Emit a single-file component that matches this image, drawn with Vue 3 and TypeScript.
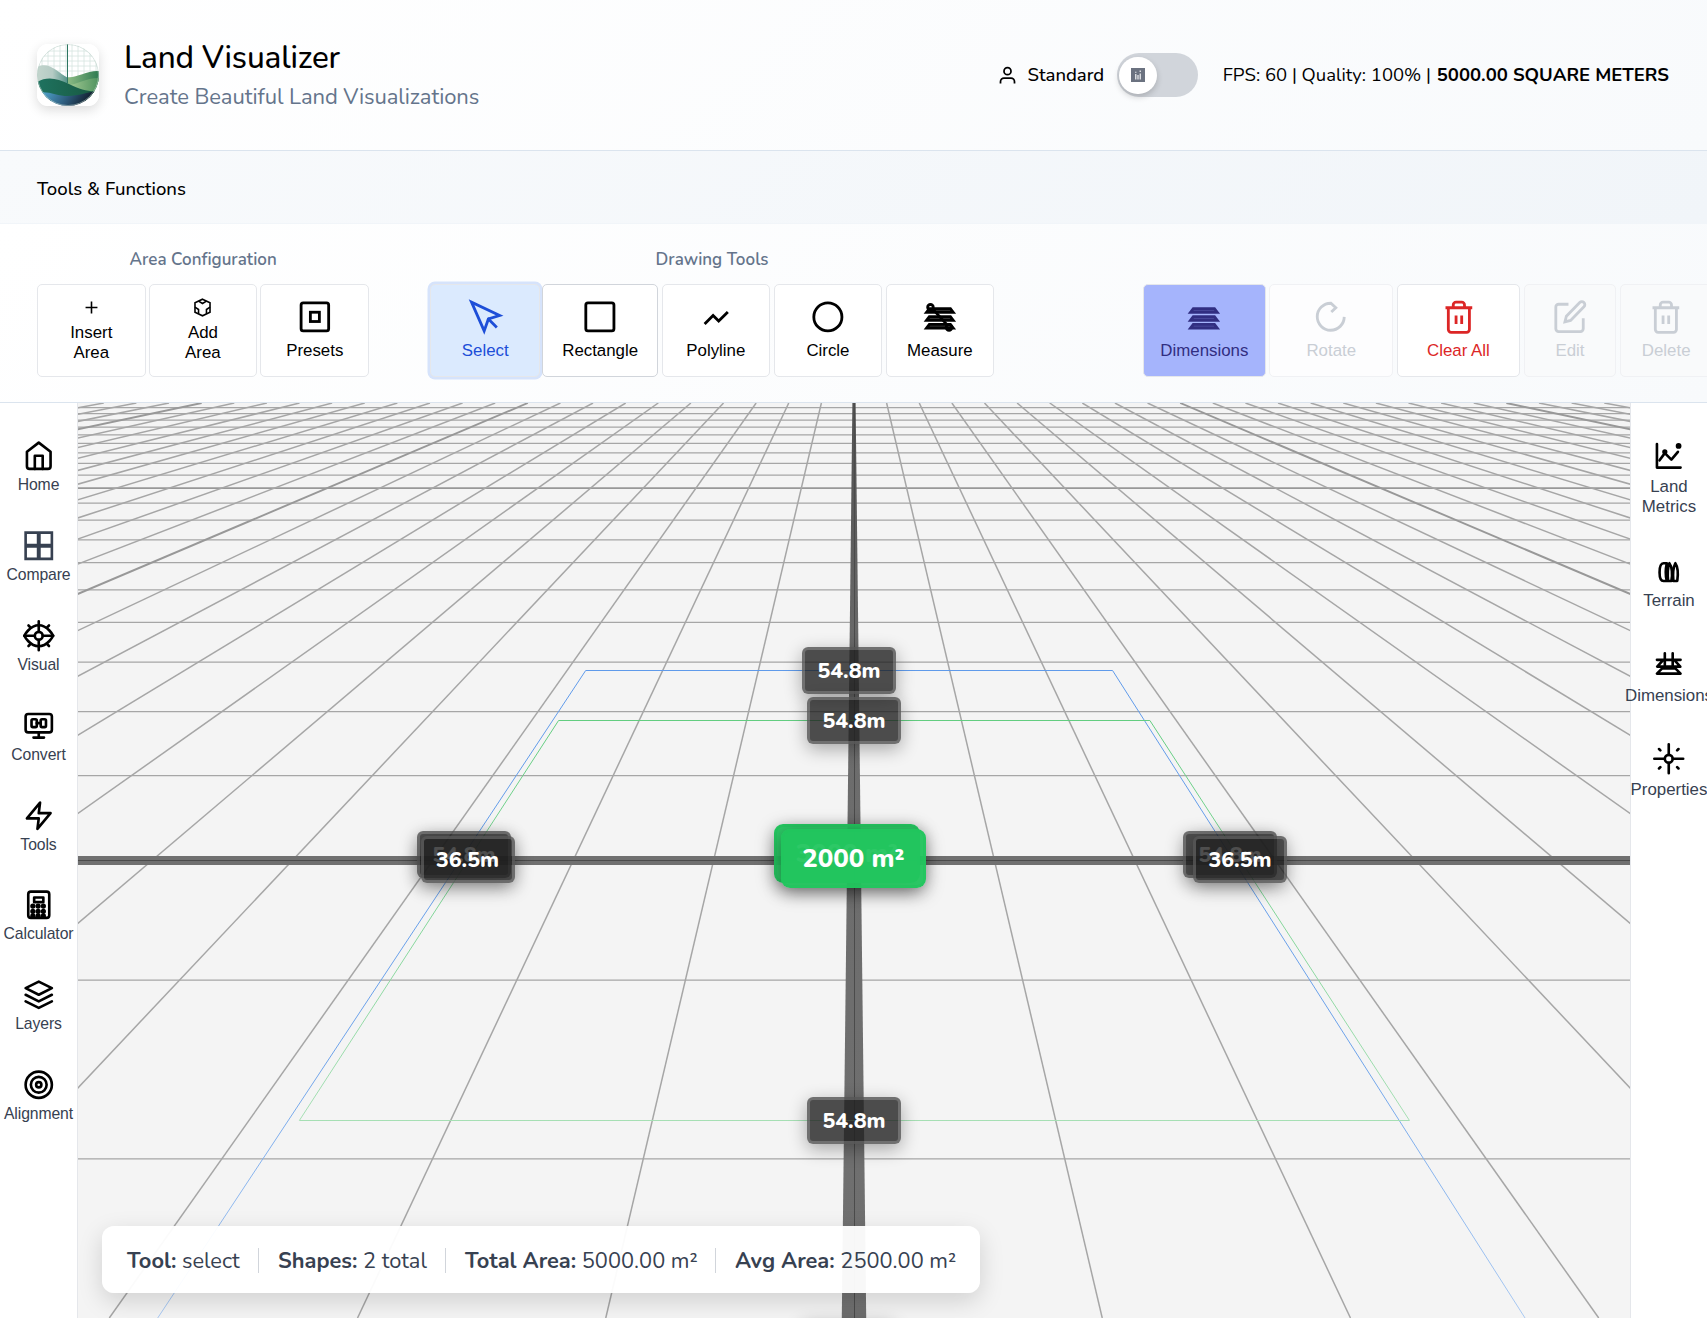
<script setup lang="ts">
interface Tool { label: string; icon: string; w: number; cls?: string; small?: boolean }
interface Side { label: string; icon: string; cls?: string }
interface Seg { x1: number; y1: number; x2: number; y2: number; flat: boolean; major: boolean }
interface Badge { text: string; x: number; y: number; area?: boolean }

const bars = '<path d="M4.500 6.200h15l2 2.600h-19zM4.500 11.800h15l2 2.600h-19zM4.500 17.300h15l2 2.600h-19z" stroke-miterlimit="8" fill="currentColor" fill-opacity=".75"/>'
const trash = '<path d="M2.500 5.500h19M19.500 5.500v15.500a2 2 0 0 1-2 2h-11a2 2 0 0 1-2-2V5.500M8 5.500v-2a2 2 0 0 1 2-2h4a2 2 0 0 1 2 2v2M10 11v6M14 11v6"/>'

const areaTools: Tool[] = [
  { label: 'Insert\nArea', w: 108.5, small: true, icon: '<path d="M12 4.500v15M4.500 12h15"/>' },
  { label: 'Add\nArea', w: 108, small: true, icon: '<path d="M12 1.500l9.500 4.500v12L12 22.500 2.500 18V6z"/><path d="M7 4l5 3 5-3M2.500 11.500l4.500 3v5.500M21.500 11.500l-4.500 3v5.500"/>' },
  { label: 'Presets', w: 109, icon: '<rect x="2.200" y="2" width="19.600" height="20" rx="1.500"/><rect x="8.800" y="8.700" width="6.400" height="6.600"/>' },
]
const drawTools: Tool[] = [
  { label: 'Select', w: 110, cls: 'active', icon: '<path d="M2.500 1.500L11.500 22l3-8.500 8-2.500z"/><path d="M14 13l6.500 6.500"/>' },
  { label: 'Rectangle', w: 115.500, cls: 'hover', icon: '<rect x="2" y="2" width="20" height="20" rx="1.500"/>' },
  { label: 'Polyline', w: 108.500, icon: '<path d="M4 17l6-6 4 4 6.500-6.500"/>' },
  { label: 'Circle', w: 108.500, icon: '<circle cx="12" cy="12" r="10"/>' },
  { label: 'Measure', w: 108, icon: bars + '<circle cx="5.300" cy="5.200" r="2"/><circle cx="18.500" cy="19.500" r="2"/><path d="M7 6.500l10 11"/>' },
]
const editTools: Tool[] = [
  { label: 'Dimensions', w: 123, cls: 'dims', icon: bars },
  { label: 'Rotate', w: 123.500, cls: 'off', icon: '<path d="M21.500 12A9.600 9.600 0 1 1 12 2.300l3.500 3.200-3.200 3"/>' },
  { label: 'Clear All', w: 123.500, cls: 'danger', icon: trash },
  { label: 'Edit', w: 92.500, cls: 'off grey', icon: '<path d="M11 3H4a2 2 0 0 0-2 2v15.500a2 2 0 0 0 2 2h15.500a2 2 0 0 0 2-2V13"/><path d="M19 1.800a2.120 2.120 0 0 1 3 3L12.500 14.500l-4 1 1-4z"/>' },
  { label: 'Delete', w: 92.500, cls: 'off grey', icon: trash },
]
const left: Side[] = [
  { label: 'Home', icon: '<path d="M3 9l9-7 9 7v11a2 2 0 0 1-2 2H5a2 2 0 0 1-2-2z"/><path d="M9 22V12h6v10"/>' },
  { label: 'Compare', cls: 'slate', icon: '<path d="M2 2h9.500v9.500H2zM12.500 2H22v9.500h-9.500zM2 12.500h9.500V22H2zM12.500 12.500H22V22h-9.500z"/>' },
  { label: 'Visual', icon: '<path d="M1 12s4-8 11-8 11 8 11 8-4 8-11 8-11-8-11-8z"/><circle cx="12" cy="12" r="3"/><path d="M12 1v8M12 15v8M1 12h8M15 12h8M4.200 4.200l1.600 1.600M18.200 18.200l1.600 1.600M4.200 19.800l1.600-1.600M18.200 5.800l1.600-1.600"/>' },
  { label: 'Convert', icon: '<rect x="2" y="3" width="20" height="14" rx="2"/><path d="M8 21h8M12 17v4M10.500 10h3"/><rect x="6.500" y="7" width="4" height="6" rx="1"/><rect x="13.500" y="7" width="4" height="6" rx="1"/>' },
  { label: 'Tools', icon: '<path d="M13 2L3 14h9l-1 8 10-12h-9z"/>' },
  { label: 'Calculator', icon: '<rect x="4" y="2" width="16" height="20" rx="2"/><path d="M8.500 6.500h7v3.500h-7z"/><g fill="currentColor"><circle cx="7.500" cy="13" r="1"/><circle cx="11.500" cy="13" r="1"/><circle cx="15.500" cy="13" r="1"/><circle cx="7.500" cy="17" r="1"/><circle cx="11.500" cy="17" r="1"/><circle cx="15.500" cy="17" r="1"/><circle cx="7.500" cy="20.500" r="1"/><circle cx="11.500" cy="20.500" r="1"/><circle cx="15.500" cy="20.500" r="1"/></g>' },
  { label: 'Layers', icon: '<path d="M12 2L2 7l10 5 10-5z"/><path d="M2 17l10 5 10-5M2 12l10 5 10-5"/>' },
  { label: 'Alignment', icon: '<circle cx="12" cy="12" r="10"/><circle cx="12" cy="12" r="6"/><circle cx="12" cy="12" r="2"/>' },
]
const right: Side[] = [
  { label: 'Land\nMetrics', cls: 'r1', icon: '<path d="M3 3v18h18"/><path d="M5 15.500l4-5.500 5 5 5-6"/><circle cx="9" cy="9" r="1"/><circle cx="19.500" cy="4.500" r="1.200" fill="currentColor"/>' },
  { label: 'Terrain', cls: 'r2', icon: '<path d="M8 5.500c-2 0-3 3-3 7s1 6.500 3 6.500h2.500c-1-4-1-9 0-13.500zM12.500 5.500c-1.200 3-1.500 8-1 13.500h2.500c1-5 .5-11-1.500-13.500zM17 5.500c-1.500 3-2 8-1.500 13.500h3c.7-5 .2-11-1.500-13.500z"/>' },
  { label: 'Dimensions', cls: 'r3', icon: '<path d="M3 9h18M9 4v9M15 4v9M7 10l-3.800 4.200h17.600L17 10M7 15.500l-4 4h18l-4-4z"/>' },
  { label: 'Properties', cls: 'r4', icon: '<circle cx="12" cy="12" r="3"/><path d="M12 1v8M12 15v8M1 12h8M15 12h8M4.600 4.600l1 1M18.400 18.400l1 1M4.600 19.400l1-1M18.400 5.600l1-1"/>' },
]

// Ground plane seen from a camera pitched 45° at the origin.
const W = 1552, H = 915, CX = 776, CY = 457.8
const A = 99.37, C = 140.5, B = 1 / 6
const horizon = CY - A / B
const slope = C / (A / B)
const segs: Seg[] = []
for (let k = -19; k <= 2; k++) {
  if (k === 0) continue
  const y = CY + (A * k) / (1 - B * k)
  segs.push({ x1: 0, y1: y, x2: W, y2: y, flat: true, major: k % 10 === 0 })
}
for (let m = -24; m <= 24; m++) {
  if (m === 0) continue
  segs.push({ x1: CX - m * slope * horizon, y1: 0, x2: CX + m * slope * (H - horizon), y2: H, flat: false, major: m % 10 === 0 })
}
const px = (s: number, y: number) => CX + s * (y - horizon)
const axis = `${px(-0.0116, 0)},0 ${px(0.0116, 0)},0 ${px(0.0116, H)},${H} ${px(-0.0116, H)},${H}`
const blue = `${px(-0.661, H)},${H} ${px(-0.661, 267.5)},267.5 ${px(0.637, 267.5)},267.5 ${px(0.637, H)},${H}`
const green = `${px(-0.648, 717.5)},717.5 ${px(-0.648, 317.5)},317.5 ${px(0.649, 317.5)},317.5 ${px(0.649, 717.5)},717.5`

const badges: Badge[] = [
  { text: '54.8m', x: 724, y: 243.5 },
  { text: '54.8m', x: 729, y: 293.5 },
  { text: '54.8m', x: 339, y: 427.5 },
  { text: '54.8m', x: 1105, y: 427.5 },
  { text: '36.5m', x: 342.500, y: 432.5 },
  { text: '36.5m', x: 1115, y: 432.5 },
  { text: '54.8m', x: 729, y: 693.5 },
  { text: '54.8m', x: 723, y: 917 },
  { text: '3000 m²', x: 696, y: 421, area: true },
  { text: '2000 m²', x: 702.500, y: 426, area: true },
]
const groups = [
  { title: 'Area Configuration', cls: 'g1', tools: areaTools },
  { title: 'Drawing Tools', cls: 'g2', tools: drawTools },
  { title: '', cls: 'g3', tools: editTools },
]
const stats = [
  ['Tool:', 'select', 's1'], ['Shapes:', '2 total', 's2'], ['Total Area:', '5000.00 m²', 's3'], ['Avg Area:', '2500.00 m²', 's4'],
]
</script>

<template>
  <div class="app">
    <header class="top">
      <svg class="logo" viewBox="0 0 62 62">
        <defs>
          <clipPath id="disc"><circle cx="31" cy="31" r="31" /></clipPath>
          <linearGradient id="sea" x1="0" x2="1" y1="0" y2=".15"><stop offset=".1" stop-color="#4fa3cc" /><stop offset=".55" stop-color="#2d5a7b" /><stop offset=".9" stop-color="#13202f" /></linearGradient>
          <linearGradient id="mist"><stop offset="0" stop-color="#c3d5cd" /><stop offset=".5" stop-color="#b5cbc4" /><stop offset="1" stop-color="#4f9186" /></linearGradient>
          <linearGradient id="hill"><stop offset="0" stop-color="#8fbd86" /><stop offset="1" stop-color="#2c7a50" /></linearGradient>
          <linearGradient id="meadow"><stop offset="0" stop-color="#a6cb95" /><stop offset="1" stop-color="#4f935f" /></linearGradient>
          <linearGradient id="forest"><stop offset="0" stop-color="#1f7360" /><stop offset="1" stop-color="#17573f" /></linearGradient>
        </defs>
        <rect width="62" height="62" fill="#fff" />
        <g clip-path="url(#disc)">
          <path d="M5 0v30M11 0v30M17 0v34M23 0v34M29 0v36M35 0v36M41 0v36M47 0v34M53 0v34M59 0v30M0 7h62M0 12h62M0 17h62M0 22h62M0 27h62" stroke="#d5e5df" stroke-width=".8" />
          <path d="M30 33c8 2 20-7 32-6v26H30z" fill="url(#hill)" />
          <path d="M30 41c10 0 18-7 32-7v18H30z" fill="url(#meadow)" />
          <path d="M0 23c12-6 20 5 31 11v12H0z" fill="url(#mist)" />
          <path d="M0 38c10-6 20-4 32 2s20 8 30 7v10H0z" fill="url(#forest)" />
          <path d="M0 49c10-3 20 3 31 3s18-4 31-5v15H0z" fill="url(#sea)" />
          <path d="M30.500 0v39" stroke="#2c7560" stroke-width="1" />
          <circle cx="31" cy="31" r="30.500" fill="none" stroke="#b9cfc8" stroke-width=".8" opacity=".7" />
        </g>
      </svg>
      <div class="brand">
        <h1>Land Visualizer</h1>
        <p>Create Beautiful Land Visualizations</p>
      </div>
      <div class="meta">
        <svg class="user" viewBox="0 0 24 24"><path d="M20 21v-2a4 4 0 0 0-4-4H8a4 4 0 0 0-4 4v2" /><circle cx="12" cy="7" r="4" /></svg>
        <span class="mode">Standard</span>
        <div class="toggle"><div class="knob"><svg viewBox="0 0 14 14"><rect width="14" height="14" fill="#6b7280" /><path d="M4.800 6v5.500M9.200 5.500v6M4.800 3.800v1M9.200 2.500v1.500M7 7v4.500" stroke="#fff" stroke-width="1.100" /></svg></div></div>
        <span class="fps">FPS: 60 | Quality: 100% | </span><b class="sqm">5000.00 SQUARE METERS</b>
      </div>
    </header>
    <div class="band"><span>Tools &amp; Functions</span></div>
    <div class="ribbon">
      <section v-for="g in groups" :key="g.cls" :class="['group', g.cls]">
        <div class="gtitle">{{ g.title }}</div>
        <div class="row">
          <button v-for="t in g.tools" :key="t.label" :class="['tool', t.cls, { small: t.small }]" :style="{ width: t.w + 'px' }">
            <svg viewBox="0 0 24 24" v-html="t.icon"></svg>
            <span>{{ t.label }}</span>
          </button>
        </div>
      </section>
    </div>
    <div class="body">
      <nav class="side lft">
        <a v-for="s in left" :key="s.label" :class="['item', s.cls]"><svg viewBox="0 0 24 24" v-html="s.icon"></svg><span>{{ s.label }}</span></a>
      </nav>
      <main class="scene">
        <svg class="ground" :viewBox="`0 0 ${W} ${H}`">
          <line v-for="(s, i) in segs" :key="i" :x1="s.x1" :y1="s.y1" :x2="s.x2" :y2="s.y2" :class="{ flat: s.flat, major: s.major }" />
          <defs>
            <linearGradient id="ax" x1="0" x2="0" y1="0" y2="1"><stop offset="0" stop-color="#505050" /><stop offset=".3" stop-color="#6c6c6c" /><stop offset="1" stop-color="#707070" /></linearGradient>
            <linearGradient id="fade" gradientUnits="userSpaceOnUse" x1="0" x2="0" y1="267" y2="915"><stop offset="0" stop-color="#5f9aea" /><stop offset=".6" stop-color="#6ea3ea" /><stop offset="1" stop-color="#a9c9f2" /></linearGradient>
            <linearGradient id="gfade" gradientUnits="userSpaceOnUse" x1="0" x2="0" y1="317" y2="718"><stop offset="0" stop-color="#62cd80" /><stop offset="1" stop-color="#a6dfb4" /></linearGradient>
          </defs>
          <rect x="0" y="453" :width="W" height="9" fill="#707070" />
          <polygon :points="axis" fill="url(#ax)" />
          <path :d="`M0 457.5H${W}M776.500 0V${H}`" stroke="#4b4b4b" stroke-width="1" />
          <polyline :points="blue" fill="none" stroke="url(#fade)" />
          <polygon :points="green" fill="none" stroke="url(#gfade)" />
        </svg>
        <div v-for="(b, i) in badges" :key="i" :class="['badge', { area: b.area }]" :style="{ left: b.x + 'px', top: b.y + 'px' }">{{ b.text }}</div>
        <div class="status">
          <div v-for="s in stats" :key="s[0]" :class="['stat', s[2]]"><b>{{ s[0] }}</b> {{ s[1] }}</div>
        </div>
      </main>
      <nav class="side rgt">
        <a v-for="s in right" :key="s.label" :class="['item', s.cls]"><svg viewBox="0 0 24 24" v-html="s.icon"></svg><span>{{ s.label }}</span></a>
      </nav>
    </div>
  </div>
</template>

<style>
body { overflow: hidden; }
</style>
<style scoped>
* { box-sizing: border-box; }
.app { width: 1707px; height: 1318px; display: flex; flex-direction: column; overflow: hidden; background: #fff; color: #000; font-family: Nunito, Lato, "Open Sans", sans-serif; }
.top { height: 151px; flex: none; display: flex; align-items: center; padding: 0 37px; border-bottom: 1px solid #dbe4ee; background: linear-gradient(135deg, #fff, #f8fafc); }
.logo { width: 62px; height: 62px; border-radius: 11px; box-shadow: 0 4px 12px rgba(0, 0, 0, .14); }
.brand { margin-left: 25px; padding-top: 4px; white-space: nowrap; }
h1 { margin: 0; font-size: 31.500px; line-height: 39px; font-weight: 500; letter-spacing: -.17px; }
p { margin: 0; font-size: 22px; line-height: 40px; color: #64748b; letter-spacing: -.07px; }
.meta { margin-left: auto; display: flex; align-items: center; font-size: 18.500px; white-space: pre; }
.user { width: 21px; height: 21px; fill: none; stroke: #000; stroke-width: 2; }
.mode { margin-left: 10px; width: 89px; font-weight: 500; }
.toggle { width: 81.500px; height: 44px; border-radius: 22px; background: #d1d5db; padding: 3.500px 2.500px; }
.knob { width: 37.500px; height: 37.500px; border-radius: 50%; background: #fff; box-shadow: 0 3px 6px rgba(0, 0, 0, .18); display: flex; align-items: center; justify-content: center; }
.knob svg { width: 14px; height: 14px; }
.fps { width: 214px; margin-left: 24.700px; }
.sqm { width: 233.300px; font-weight: 700; }
.band { height: 73px; flex: none; display: flex; align-items: center; padding: 4px 37px 0; font-size: 18.600px; font-weight: 500; background: linear-gradient(135deg, #f8fafc, #f1f5f9); border-bottom: 1px solid #f1f5f9; }
.ribbon { height: 179px; flex: none; display: flex; padding: 22px 0 0 37px; border-bottom: 1px solid #dbe4ee; background: linear-gradient(135deg, #fff, #f8fafc); }
.group { flex: none; }
.g2 { margin-left: 61px; }
.g3 { margin-left: 149px; }
.gtitle { height: 38px; line-height: 28px; text-align: center; color: #64748b; font-size: 17px; font-weight: 600; letter-spacing: .03px; }
.row { display: flex; gap: 3.400px; }
.g2 .row, .g3 .row { gap: 3.650px; }
.tool { flex: none; height: 93px; padding: 0; border: 1px solid #e5e7eb; border-radius: 5px; background: #fff; color: #000; display: flex; flex-direction: column; align-items: center; justify-content: center; font: 16.875px/20px "Liberation Sans", Arial, sans-serif; white-space: pre; text-align: center; }
.tool svg { width: 33.750px; height: 33.750px; margin-bottom: 8px; }
.tool.small svg { width: 19px; height: 19px; margin-bottom: 6px; }
.tool svg, .item svg { fill: none; stroke: currentColor; stroke-width: 2; overflow: visible; flex: none; }
.tool.active { background: #dbeafe; color: #1d4ed8; box-shadow: 0 0 0 2.500px #d6e3fb; margin-right: -1.500px; }
.tool.hover { border-color: #d1d5db; }
.tool.dims { background: #a5b4fc; color: #312e81; }
.tool.danger { color: #dc2626; }
.tool.off { color: #c9ced5; border-color: #f0f1f4; background: #fdfdfe; }
.tool.grey { background: #f9fafb; }
.body { flex: 1; display: flex; min-height: 0; }
.side { flex: none; background: #fff; display: flex; flex-direction: column; align-items: center; padding-top: 37px; }
.lft { width: 78px; border-right: 1px solid #e5e7eb; }
.rgt { width: 77px; border-left: 1px solid #e5e7eb; position: relative; z-index: 1; }
.item { height: 89.900px; flex: none; display: flex; flex-direction: column; align-items: center; color: #000; white-space: pre; text-align: center; }
.item svg { width: 31.500px; height: 31.500px; margin-bottom: 3.500px; stroke-linecap: round; stroke-linejoin: round; }
.item span { color: #374151; font: 15.750px/19.700px "Liberation Sans", Arial, sans-serif; letter-spacing: -.1px; }
.rgt .item span { font-size: 16.875px; line-height: 20px; letter-spacing: 0; }
.slate { color: #374151; }
.slate svg { stroke-linecap: butt; stroke-linejoin: miter; }
.r1 { height: 116px; }
.r1 svg { margin-bottom: 5px; }
.r2 { height: 91.500px; }
.r3 { height: 95px; }
.r3 svg { margin-bottom: 6.500px; }
.r4 svg { margin-bottom: 6px; }
.scene { flex: 1; position: relative; overflow: hidden; background: #f4f4f4; }
.ground { display: block; width: 1552px; height: 915px; }
.ground line { stroke: #a6a6a6; stroke-width: 1.500; }
.ground line.flat { stroke-width: 1.250; }
.ground line.major { stroke: #989898; stroke-width: 1.900; }
.badge { position: absolute; width: 94px; height: 47.500px; border: 3px solid rgba(255, 255, 255, .2); border-radius: 6px; background: rgba(31, 31, 31, .79); color: #fff; font-size: 21.400px; font-weight: 800; line-height: 42px; text-align: center; box-shadow: 0 5px 18px rgba(0, 0, 0, .32); white-space: nowrap; }
.area { width: 145.500px; height: 58.500px; border: 3px solid rgba(34, 197, 94, .6); border-radius: 9px; background: rgba(34, 197, 94, .95); font-size: 25.900px; line-height: 54px; box-shadow: 0 5px 18px rgba(0, 0, 0, .4); }
.status { position: absolute; left: 24px; top: 823px; width: 878px; height: 67px; border-radius: 12px; background: rgba(255, 255, 255, .95); box-shadow: 0 8px 24px rgba(0, 0, 0, .15); display: flex; align-items: center; padding: 1px 0 0 25px; color: #374151; font-size: 21.800px; white-space: nowrap; }
.stat { height: 25px; line-height: 26px; border-right: 1.500px solid #d1d5db; margin-right: 19px; }
.s1 { width: 132px; } .s2 { width: 168px; } .s3 { width: 251px; } .s4 { width: 222px; border: 0; margin: 0; }
</style>
